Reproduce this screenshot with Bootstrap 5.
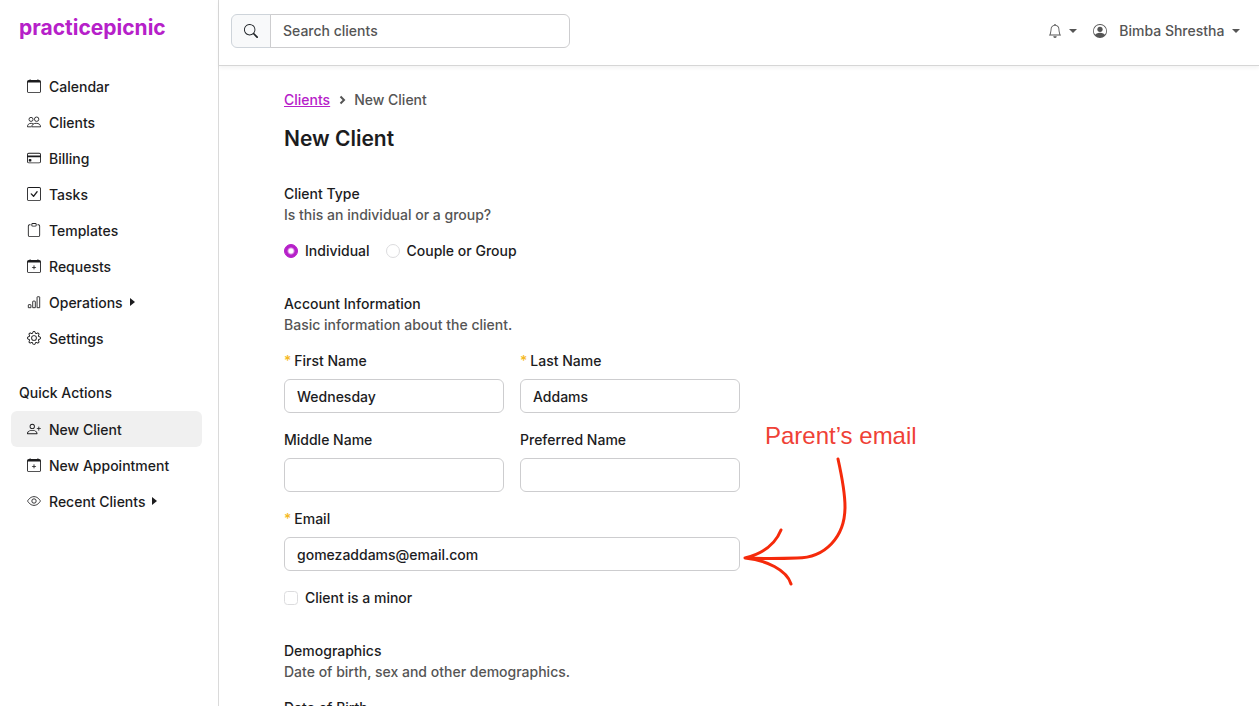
<!DOCTYPE html>
<html lang="en">
<head>
<meta charset="utf-8">
<meta name="viewport" content="width=device-width, initial-scale=1">
<title>New Client - practicepicnic</title>
<link href="https://cdn.jsdelivr.net/npm/bootstrap@5.3.0/dist/css/bootstrap.min.css" rel="stylesheet">
<style>
  :root { --brand: #b620c9; --ink: #1c1c1e; --soft: #555; }
  body { font-family: Inter, "Liberation Sans", sans-serif; font-size: 14px; line-height: 21px; font-weight: 500; color: var(--ink); background: #fff; }
  .side-panel { width: 219px; padding: 16px 16px 0 11px; border-right: 1px solid #dadada; }
  .logo-text { font-size: 21px; line-height: 24px; font-weight: 700; color: var(--brand); padding-left: 8px; margin-bottom: 28px; }
  .side-nav .nav-link { display: flex; align-items: center; height: 36px; padding: 0 16px; color: inherit; border-radius: 6px; }
  .side-nav .nav-link svg { margin-right: 8px; }
  .side-nav .nav-link .caret-side { margin: 0 0 0 7px; }
  .side-nav .nav-link.active, .side-nav .nav-link:hover { background: #f0f0f0; }
  .side-title { padding-left: 8px; margin: 26px 0 8px; }
  .caret-side { border: 4px solid transparent; border-left: 5px solid currentColor; border-right: 0; }
  .top-bar { height: 66px; padding: 0 19px 4px 12px; border-bottom: 1px solid #d6d6d6; box-shadow: 0 2px 4px rgba(0,0,0,.05); }
  .search-box { width: 339px; }
  .search-box .input-group-text { padding: 0 12px; background: #f8f9fa; border-color: #ced4da; }
  .form-control { height: 34px; padding: 5px 12px; font-size: 14px; line-height: 21px; font-weight: 500; color: var(--ink); border-color: #cdcdcf; border-radius: 6px; }
  .form-control::placeholder { color: var(--soft); }
  .top-link { color: var(--soft); font-size: 14px; line-height: 21px; font-weight: 500; border: 0; background: none; padding: 0; }
  .page-body { padding: 23px 65px 0; overflow-y: auto; scrollbar-width: none; }
  .page-body::-webkit-scrollbar { display: none; }
  .crumbs a { color: var(--brand); }
  .crumbs, .hint { color: var(--soft); }
  h1 { font-size: 21px; line-height: 26px; font-weight: 600; margin: 16px 0 31px; }
  .client-form { max-width: 456px; }
  .client-form section { margin-bottom: 32px; }
  .side-title, .client-form h2 { font-size: 14px; line-height: 21px; font-weight: 500; }
  .client-form h2 { margin: 0; }
  .hint { margin-bottom: 15px; }
  .form-label { margin-bottom: 8px; display: block; }
  .req { color: #f5b921; margin-right: 3px; }
  .form-check { display: flex; align-items: center; gap: 7px; min-height: 21px; padding: 0; margin: 0; }
  .form-check .form-check-input { float: none; width: 14px; height: 14px; margin: 0; border-color: #dcdcde; }
  .form-check-input:checked { background-color: var(--brand); border-color: var(--brand) !important; }
  .form-check-input:checked[type=radio] { background-image: radial-gradient(circle, #fff 2px, transparent 4px); }
  .note { left: 489px; top: -86px; width: 160px; color: #ef4136; font: 400 24px/28px "Liberation Sans", sans-serif; pointer-events: none; }
  .note svg { display: block; margin: 5px 0 0 -24px; }
</style>
</head>
<body>
<svg class="d-none">
  <symbol id="calendar" viewBox="0 0 16 16"><path d="M3.500 0a.5.5 0 0 1 .5.5V1h8V.5a.5.5 0 0 1 1 0V1h1a2 2 0 0 1 2 2v11a2 2 0 0 1-2 2H2a2 2 0 0 1-2-2V3a2 2 0 0 1 2-2h1V.5a.5.5 0 0 1 .5-.5zM1 4v10a1 1 0 0 0 1 1h12a1 1 0 0 0 1-1V4H1z"/></symbol>
  <symbol id="calendar-plus" viewBox="0 0 16 16"><path d="M8 7a.5.5 0 0 1 .5.5V9H10a.5.5 0 0 1 0 1H8.500v1.500a.5.5 0 0 1-1 0V10H6a.5.5 0 0 1 0-1h1.500V7.500A.5.5 0 0 1 8 7z"/><path d="M3.500 0a.5.5 0 0 1 .5.5V1h8V.5a.5.5 0 0 1 1 0V1h1a2 2 0 0 1 2 2v11a2 2 0 0 1-2 2H2a2 2 0 0 1-2-2V3a2 2 0 0 1 2-2h1V.5a.5.5 0 0 1 .5-.5zM1 4v10a1 1 0 0 0 1 1h12a1 1 0 0 0 1-1V4H1z"/></symbol>
  <symbol id="people" viewBox="0 0 16 16"><g fill="none" stroke="currentColor"><circle cx="4.600" cy="5" r="2.300"/><circle cx="11" cy="4.800" r="2.500"/><path d="M5.500 13.500c0-2.700 2-4 5-4s5 1.300 5 4zM5 13.500H.5c0-2.500 1.600-4 4.300-4 .9 0 1.600.2 2.200.5"/></g></symbol>
  <symbol id="card-icon" viewBox="0 0 16 16"><path d="M0 4a2 2 0 0 1 2-2h12a2 2 0 0 1 2 2v8a2 2 0 0 1-2 2H2a2 2 0 0 1-2-2V4zm2-1a1 1 0 0 0-1 1v1h14V4a1 1 0 0 0-1-1H2zm13 4H1v5a1 1 0 0 0 1 1h12a1 1 0 0 0 1-1V7z"/><path d="M2 10a1 1 0 0 1 1-1h1a1 1 0 0 1 1 1v1a1 1 0 0 1-1 1H3a1 1 0 0 1-1-1v-1z"/></symbol>
  <symbol id="check" viewBox="0 0 16 16"><path d="M14 1a1 1 0 0 1 1 1v12a1 1 0 0 1-1 1H2a1 1 0 0 1-1-1V2a1 1 0 0 1 1-1h12zM2 0a2 2 0 0 0-2 2v12a2 2 0 0 0 2 2h12a2 2 0 0 0 2-2V2a2 2 0 0 0-2-2H2z"/><path d="M10.970 4.970a.75.75 0 0 1 1.071 1.050l-3.992 4.990a.75.75 0 0 1-1.080.020L4.324 8.384a.75.75 0 1 1 1.060-1.060l2.094 2.093 3.473-4.425a.235.235 0 0 1 .020-.022z"/></symbol>
  <symbol id="clipboard" viewBox="0 0 16 16"><path d="M4 1.500H3a2 2 0 0 0-2 2V14a2 2 0 0 0 2 2h10a2 2 0 0 0 2-2V3.500a2 2 0 0 0-2-2h-1v1h1a1 1 0 0 1 1 1V14a1 1 0 0 1-1 1H3a1 1 0 0 1-1-1V3.500a1 1 0 0 1 1-1h1v-1z"/><path d="M9.500 1a.5.5 0 0 1 .5.5v1a.5.5 0 0 1-.5.5h-3a.5.5 0 0 1-.5-.5v-1a.5.5 0 0 1 .5-.5h3zm-3-1A1.500 1.500 0 0 0 5 1.500v1A1.500 1.500 0 0 0 6.500 4h3A1.500 1.500 0 0 0 11 2.500v-1A1.500 1.500 0 0 0 9.500 0h-3z"/></symbol>
  <symbol id="bars" viewBox="0 0 16 16"><path fill="none" stroke="currentColor" d="M1.500 11.500a.5.5 0 0 1 .5-.5h2a.5.5 0 0 1 .5.500v3H1.500zM6.500 7.500A.5.5 0 0 1 7 7h2a.5.5 0 0 1 .5.5v7h-3zM11.500 2.500A.5.5 0 0 1 12 2h2a.5.5 0 0 1 .5.5v12h-3z"/></symbol>
  <symbol id="gear" viewBox="0 0 16 16"><path d="M8 4.754a3.246 3.246 0 1 0 0 6.492 3.246 3.246 0 0 0 0-6.492zM5.754 8a2.246 2.246 0 1 1 4.492 0 2.246 2.246 0 0 1-4.492 0z"/><path d="M9.796 1.343c-.527-1.790-3.065-1.790-3.592 0l-.094.319a.873.873 0 0 1-1.255.520l-.292-.160c-1.640-.892-3.433.902-2.540 2.541l.159.292a.873.873 0 0 1-.520 1.255l-.319.094c-1.790.527-1.790 3.065 0 3.592l.319.094a.873.873 0 0 1 .520 1.255l-.160.292c-.892 1.640.901 3.434 2.541 2.540l.292-.159a.873.873 0 0 1 1.255.520l.094.319c.527 1.790 3.065 1.790 3.592 0l.094-.319a.873.873 0 0 1 1.255-.520l.292.160c1.640.893 3.434-.902 2.540-2.541l-.159-.292a.873.873 0 0 1 .520-1.255l.319-.094c1.790-.527 1.790-3.065 0-3.592l-.319-.094a.873.873 0 0 1-.520-1.255l.160-.292c.893-1.640-.902-3.433-2.541-2.540l-.292.159a.873.873 0 0 1-1.255-.520l-.094-.319zm-2.633.283c.246-.835 1.428-.835 1.674 0l.094.319a1.873 1.873 0 0 0 2.693 1.115l.291-.160c.764-.415 1.600.420 1.184 1.185l-.159.292a1.873 1.873 0 0 0 1.116 2.692l.318.094c.835.246.835 1.428 0 1.674l-.319.094a1.873 1.873 0 0 0-1.115 2.693l.160.291c.415.764-.420 1.600-1.185 1.184l-.291-.159a1.873 1.873 0 0 0-2.693 1.116l-.094.318c-.246.835-1.428.835-1.674 0l-.094-.319a1.873 1.873 0 0 0-2.692-1.115l-.292.160c-.764.415-1.600-.420-1.184-1.185l.159-.291A1.873 1.873 0 0 0 1.945 8.930l-.319-.094c-.835-.246-.835-1.428 0-1.674l.319-.094A1.873 1.873 0 0 0 3.060 4.377l-.160-.292c-.415-.764.420-1.600 1.185-1.184l.292.159a1.873 1.873 0 0 0 2.692-1.115l.094-.319z"/></symbol>
  <symbol id="person-plus" viewBox="0 0 16 16"><path d="M6 8a3 3 0 1 0 0-6 3 3 0 0 0 0 6zm2-3a2 2 0 1 1-4 0 2 2 0 0 1 4 0zm4 8c0 1-1 1-1 1H1s-1 0-1-1 1-4 6-4 6 3 6 4zm-1-.004c-.001-.246-.154-.986-.832-1.664C9.516 10.680 8.289 10 6 10c-2.290 0-3.516.680-4.168 1.332-.678.678-.830 1.418-.832 1.664h10z"/><path d="M13.500 5a.5.5 0 0 1 .5.5V7h1.500a.5.5 0 0 1 0 1H14v1.500a.5.5 0 0 1-1 0V8h-1.500a.5.5 0 0 1 0-1H13V5.500a.5.5 0 0 1 .5-.5z"/></symbol>
  <symbol id="eye" viewBox="0 0 16 16"><path fill="none" stroke="currentColor" d="M.6 8S3.300 3 8 3s7.400 5 7.400 5-2.700 5-7.400 5S.6 8 .6 8z"/><circle cx="8" cy="8" r="2.500" fill="none" stroke="currentColor"/></symbol>
  <symbol id="search" viewBox="0 0 16 16"><path d="M11.742 10.344a6.500 6.500 0 1 0-1.397 1.398h-.001c.030.040.062.078.098.115l3.850 3.850a1 1 0 0 0 1.415-1.414l-3.850-3.850a1.007 1.007 0 0 0-.115-.100zM12 6.500a5.500 5.500 0 1 1-11 0 5.500 5.500 0 0 1 11 0z"/></symbol>
  <symbol id="bell" viewBox="0 0 16 16"><path d="M8 16a2 2 0 0 0 2-2H6a2 2 0 0 0 2 2zM8 1.918l-.797.161A4.002 4.002 0 0 0 4 6c0 .628-.134 2.197-.459 3.742-.160.767-.376 1.566-.663 2.258h10.244c-.287-.692-.502-1.490-.663-2.258C12.134 8.197 12 6.628 12 6a4.002 4.002 0 0 0-3.203-3.920L8 1.917zM14.220 12c.223.447.481.801.780 1H1c.299-.199.557-.553.780-1C2.680 10.200 3 6.880 3 6c0-2.420 1.720-4.440 4.005-4.901a1 1 0 1 1 1.990 0A5.002 5.002 0 0 1 13 6c0 .880.320 4.200 1.220 6z"/></symbol>
  <symbol id="person" viewBox="0 0 16 16"><path d="M11 6a3 3 0 1 1-6 0 3 3 0 0 1 6 0z"/><path fill-rule="evenodd" d="M0 8a8 8 0 1 1 16 0A8 8 0 0 1 0 8zm8-7a7 7 0 0 0-5.468 11.370C3.242 11.226 4.805 10 8 10s4.757 1.225 5.468 2.370A7 7 0 0 0 8 1z"/></symbol>
</svg>
<div class="d-flex vh-100 overflow-hidden">
  <aside class="side-panel flex-shrink-0">
    <div class="logo-text">practicepicnic</div>
    <nav class="side-nav nav flex-column flex-nowrap">
      <a class="nav-link" href="#"><svg width="14" height="14" fill="currentColor"><use href="#calendar"/></svg>Calendar</a>
      <a class="nav-link" href="#"><svg width="14" height="14" fill="currentColor"><use href="#people"/></svg>Clients</a>
      <a class="nav-link" href="#"><svg width="14" height="14" fill="currentColor"><use href="#card-icon"/></svg>Billing</a>
      <a class="nav-link" href="#"><svg width="14" height="14" fill="currentColor"><use href="#check"/></svg>Tasks</a>
      <a class="nav-link" href="#"><svg width="14" height="14" fill="currentColor"><use href="#clipboard"/></svg>Templates</a>
      <a class="nav-link" href="#"><svg width="14" height="14" fill="currentColor"><use href="#calendar-plus"/></svg>Requests</a>
      <a class="nav-link" href="#"><svg width="14" height="14" fill="currentColor"><use href="#bars"/></svg>Operations<span class="caret-side"></span></a>
      <a class="nav-link" href="#"><svg width="14" height="14" fill="currentColor"><use href="#gear"/></svg>Settings</a>
    </nav>
    <h2 class="side-title">Quick Actions</h2>
    <nav class="side-nav nav flex-column">
      <a class="nav-link active" href="#" aria-current="page"><svg width="14" height="14" fill="currentColor"><use href="#person-plus"/></svg>New Client</a>
      <a class="nav-link" href="#"><svg width="14" height="14" fill="currentColor"><use href="#calendar-plus"/></svg>New Appointment</a>
      <a class="nav-link" href="#"><svg width="14" height="14" fill="currentColor"><use href="#eye"/></svg>Recent Clients<span class="caret-side"></span></a>
    </nav>
  </aside>
  <div class="d-flex flex-column flex-grow-1">
    <header class="top-bar d-flex align-items-center justify-content-between flex-shrink-0">
      <div class="search-box input-group">
        <label class="input-group-text" for="q" aria-label="Search clients"><svg width="14" height="14" fill="currentColor"><use href="#search"/></svg></label>
        <input id="q" type="search" class="form-control" placeholder="Search clients">
      </div>
      <div class="d-flex align-items-center gap-3">
        <button type="button" class="top-link dropdown-toggle d-flex align-items-center gap-1" aria-label="Notifications"><svg width="14" height="14" fill="currentColor"><use href="#bell"/></svg></button>
        <button type="button" class="top-link dropdown-toggle d-flex align-items-center gap-1"><svg class="me-2" width="14" height="14" fill="currentColor"><use href="#person"/></svg>Bimba Shrestha</button>
      </div>
    </header>
    <main class="page-body flex-grow-1">
      <nav class="crumbs d-flex align-items-center gap-2" aria-label="breadcrumb">
        <a href="#">Clients</a>
        <svg width="8" height="10" viewBox="0 0 8 10" fill="none" stroke="currentColor" stroke-width="2"><path d="M2.500 1.500 6 5 2.500 8.500"/></svg>
        <span>New Client</span>
      </nav>
      <h1>New Client</h1>
      <form class="client-form">
        <section>
          <h2>Client Type</h2>
          <div class="hint">Is this an individual or a group?</div>
          <div class="d-flex gap-3">
            <div class="form-check"><input class="form-check-input" type="radio" name="kind" id="single" checked><label for="single">Individual</label></div>
            <div class="form-check"><input class="form-check-input" type="radio" name="kind" id="group"><label for="group">Couple or Group</label></div>
          </div>
        </section>
        <section>
          <h2>Account Information</h2>
          <div class="hint">Basic information about the client.</div>
          <div class="row g-3">
            <div class="col-6"><label class="form-label" for="first"><span class="req">*</span>First Name</label><input class="form-control" id="first" type="text" value="Wednesday"></div>
            <div class="col-6"><label class="form-label" for="last"><span class="req">*</span>Last Name</label><input class="form-control" id="last" type="text" value="Addams"></div>
            <div class="col-6"><label class="form-label" for="middle">Middle Name</label><input class="form-control" id="middle" type="text"></div>
            <div class="col-6"><label class="form-label" for="pref">Preferred Name</label><input class="form-control" id="pref" type="text"></div>
            <div class="col-12 position-relative">
              <label class="form-label" for="email"><span class="req">*</span>Email</label><input class="form-control" id="email" type="email" value="gomezaddams@email.com">
              <div class="note position-absolute text-nowrap">Parent’s email
                <svg width="110" height="132" viewBox="0 0 110 132" fill="none" stroke="#f52a0b" stroke-width="3" stroke-linecap="round" stroke-linejoin="round"><path d="M97 4C101 22 104 38 104 52 104 82 84 103 56 103Q30 104 4 103M40 75C34 90 20 99 4 103 25 105 46 115 50 129"/></svg>
              </div>
            </div>
            <div class="col-12"><div class="form-check"><input class="form-check-input" type="checkbox" id="minor"><label for="minor">Client is a minor</label></div></div>
          </div>
        </section>
        <section>
          <h2>Demographics</h2>
          <div class="hint">Date of birth, sex and other demographics.</div>
          <label class="form-label" for="dob">Date of Birth</label>
          <input class="form-control" id="dob" type="text">
        </section>
      </form>
    </main>
  </div>
</div>
<script src="https://cdn.jsdelivr.net/npm/bootstrap@5.3.0/dist/js/bootstrap.bundle.min.js"></script>
</body>
</html>
